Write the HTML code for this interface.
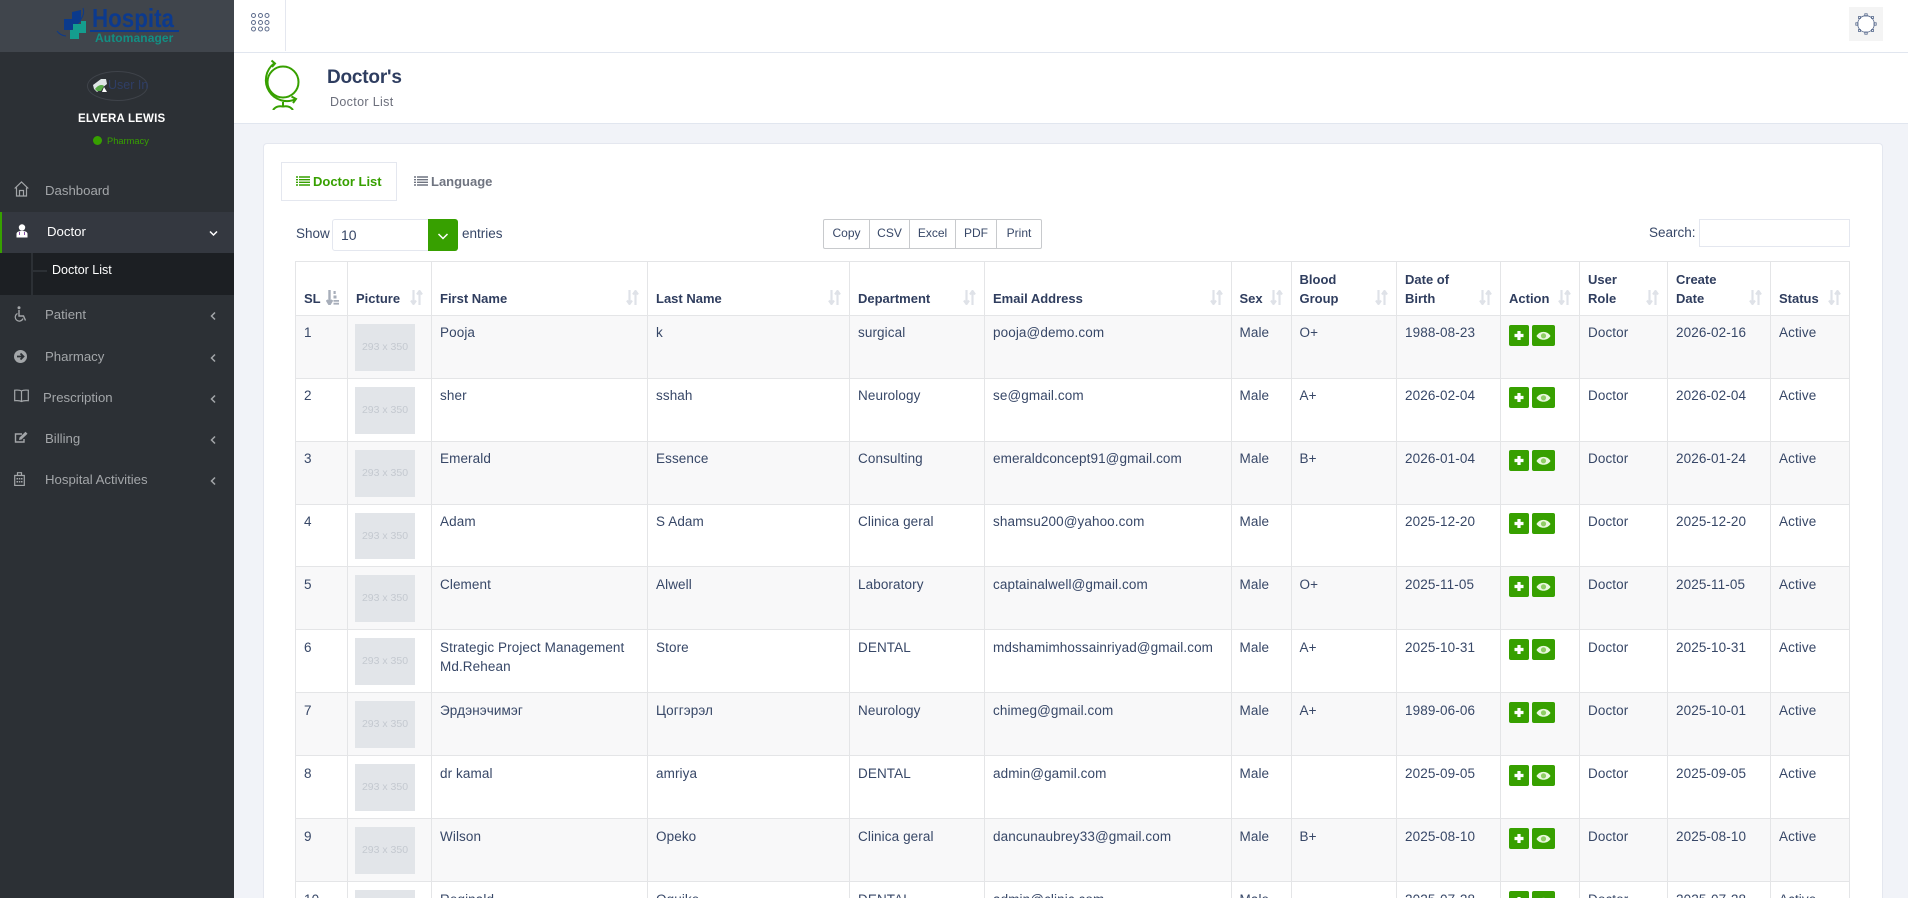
<!DOCTYPE html>
<html><head><meta charset="utf-8"><title>Doctor List</title>
<style>
*{box-sizing:border-box}
html,body{margin:0;padding:0;width:1908px;height:898px;overflow:hidden;background:#f1f3f8;font-family:"Liberation Sans",sans-serif;color:#374767}
#root{position:relative;width:1908px;height:898px;overflow:hidden;background:#f1f3f8}
.abs,.side span,.side svg{position:absolute}
.side{position:absolute;left:0;top:0;width:234px;height:898px;background:#2c3035;overflow:hidden}
.logo{position:absolute;left:0;top:0;width:234px;height:52px;background:#40454c}
.mi{font-size:13.2px;line-height:18px;color:#a3a6a9;white-space:nowrap;margin-top:1px}
.top{position:absolute;left:234px;top:0;width:1674px;height:53px;background:#fff;border-bottom:1px solid #e1e6ef}
.ph{position:absolute;left:234px;top:53px;width:1674px;height:71px;background:#fff;border-bottom:1px solid #e1e6ef}
.card{position:absolute;left:263px;top:143px;width:1620px;height:755px;background:#fff;border:1px solid #e4e7ef;border-bottom:0;border-radius:4px 4px 0 0}
.tw{position:absolute;left:295px;top:261px;width:1555px;height:637px;overflow:hidden}
table{width:1554px;border-collapse:collapse;table-layout:fixed;font-size:13.5px;letter-spacing:.1px;background:#fff}
th,td{border:1px solid #e4e5e7;text-align:left;overflow:visible}
th{height:54px;vertical-align:bottom;padding:0 8px 7px;font-size:13px;letter-spacing:0;line-height:19px;color:#2f3d5e;position:relative;font-weight:700}
td{height:63px;vertical-align:top;padding:8px 8px 0;line-height:19px}
tbody tr:nth-child(-n+4) td{padding-top:7px}
tbody tr:nth-child(odd) td{background:#f8f8f9}
tr.s td{height:62px}
tbody tr td.p{padding-top:8px;padding-left:8px}
.im{display:block;width:60px;height:47px;background:#e2e5e9;color:#c4c9d0;font-size:10.5px;line-height:47px;text-align:center;letter-spacing:0;margin-left:-1px;white-space:nowrap}
.so{position:absolute;right:8px;bottom:10px;width:13px;height:15px}
.ac{display:flex;gap:3px;margin-top:1px}
.ac i{display:block;height:20.5px;background:#37a000;border-radius:2px;position:relative}
.ac i.a{width:20px}.ac i.b{width:23px}
.ac svg{position:absolute;left:0;top:0}
.bg{position:absolute;left:823px;top:219px;width:219px;height:30px;border:1px solid #c8cacd;border-radius:2px;display:flex;font-size:12px;line-height:27px;color:#374767;background:#fff}
.bg div{text-align:center;border-right:1px solid #c8cacd}
.bg div:last-child{border-right:0}
</style></head><body>
<div id="root">
<svg width="0" height="0" style="position:absolute"><defs>
<symbol id="srt" viewBox="0 0 13 15"><path d="M3.500 0v13M1 10.500l2.500 3.500 2.500-3.500M9.500 15V2M7 4.500L9.500 1 12 4.500" fill="none" stroke="currentColor" stroke-width="2.200"/></symbol>
<symbol id="sra" viewBox="0 0 13 15"><path d="M3.500 0v13M.8 10l2.700 4.500L6.200 10" fill="none" stroke="currentColor" stroke-width="2.400"/><path d="M7.500 1h2.200v3H7.500zM7.500 5.500h3v3h-3zM7.500 10h5.500v1.800H7.500zM7.500 12.800h5.500v1.800H7.500z" fill="currentColor"/></symbol>
<symbol id="lst" viewBox="0 0 14 10"><path d="M0 1h2M3 1h11M0 3.700h2M3 3.700h11M0 6.300h2M3 6.300h11M0 9h2M3 9h11" stroke="currentColor" stroke-width="1.400" fill="none"/></symbol>
<symbol id="plus" viewBox="0 0 20 21"><path d="M10 6v9M5.500 10.500h9" stroke="#fff" stroke-width="3.200" fill="none"/></symbol>
<symbol id="eye" viewBox="0 0 23 21"><path d="M4.500 11c3-5.500 11-5.500 14 0-3 5-11 5-14 0z" fill="#eaf8df"/><circle cx="11.500" cy="10.800" r="2.600" fill="#8fce66"/></symbol>
<symbol id="chl" viewBox="0 0 8 12"><path d="M6 2.500L2.500 6 6 9.500" stroke="#a3a6a9" stroke-width="1.500" fill="none"/></symbol>
</defs></svg>

<div class="side">
 <div class="logo"></div>
 <svg style="left:56px;top:7px" width="32" height="34" viewBox="0 0 32 34"><path d="M27 1c2 6-1 10-4 14" fill="none" stroke="#0b3a8c" stroke-width="1"/><path d="M8 12h8V5l9-2v11l-9 9H8z" fill="#0b3a8c"/><path d="M14 23h3v-6h8v-3h5v12h-7v6h-9z" fill="#149d8e"/><path d="M1 24c2 3 6 5 9 5" fill="none" stroke="#0b3a8c" stroke-width="1"/></svg>
 <span style="left:92px;top:3px;font:700 26px/30px 'Liberation Sans',sans-serif;color:#0c3a8e;transform:scaleX(.86);transform-origin:0 0;white-space:nowrap">Hospita</span>
 <div class="abs" style="left:90px;top:30px;width:89px;height:1.500px;background:#0c3a8e"></div>
 <span style="left:95px;top:31px;font:700 12px/15px 'Liberation Sans',sans-serif;color:#128f84;letter-spacing:.1px">Automanager</span>

 <div class="abs" style="left:87px;top:71px;width:61px;height:30px;border:1px solid #3f434a;border-radius:50%"></div>
 <svg style="left:92px;top:78px" width="16" height="15" viewBox="0 0 16 15"><path d="M1 7l8-6 5 0 1 5-10 8-3-3z" fill="#dfe5e6"/><path d="M3 11c3-4 7-5 9-3l-3 5H5z" fill="#58a948"/><path d="M12 9l3 5h-5z" fill="#fff"/></svg>
 <span style="left:108px;top:76px;font-size:12.500px;line-height:18px;color:#2f3e66;white-space:nowrap">User In</span>
 <span style="left:78px;top:111px;font-size:11.500px;line-height:16px;font-weight:700;color:#fff;letter-spacing:.2px;white-space:nowrap">ELVERA LEWIS</span>
 <div class="abs" style="left:93px;top:136px;width:9px;height:9px;border-radius:50%;background:#37a000"></div>
 <span style="left:107px;top:134px;font-size:9.300px;line-height:14px;color:#37a000">Pharmacy</span>

 <svg style="left:14px;top:181px" width="15" height="16" viewBox="0 0 15 16"><path d="M.7 7.500L7.500 1l6.800 6.500M2.500 6.500V15h10V6.500M5.500 15V9.500h4V15" fill="none" stroke="#a3a6a9" stroke-width="1.200"/></svg>
 <span class="mi" style="left:45px;top:181px">Dashboard</span>

 <div class="abs" style="left:0;top:212px;width:234px;height:41px;background:#343840;border-left:2px solid #37a000"></div>
 <svg style="left:16px;top:224px" width="12" height="14" viewBox="0 0 12 14"><circle cx="6" cy="3.500" r="3.200" fill="#fff"/><path d="M.5 13.500V10c0-2 2-3 5.500-3s5.500 1 5.500 3v3.500z" fill="#fff"/><path d="M3.500 8v3M8.500 8v3" stroke="#8a4fa8" stroke-width="1"/></svg>
 <span class="mi" style="left:47px;top:222px;color:#fff">Doctor</span>
 <svg style="left:209px;top:230px" width="9" height="7" viewBox="0 0 9 7"><path d="M1 1.500l3.500 3.500L8 1.500" fill="none" stroke="#fff" stroke-width="1.500"/></svg>

 <div class="abs" style="left:0;top:253px;width:234px;height:42px;background:#1c1f23"></div>
 <div class="abs" style="left:31px;top:253px;width:2px;height:42px;background:#2c3035"></div>
 <div class="abs" style="left:33px;top:270px;width:14px;height:2px;background:#2c3035"></div>
 <span style="left:52px;top:262px;font-size:12.500px;line-height:16px;color:#fff">Doctor List</span>

 <svg style="left:14px;top:306px" width="13" height="16" viewBox="0 0 13 16"><circle cx="5" cy="1.800" r="1.500" fill="#a3a6a9"/><path d="M5 4v6h4.500l2 4.500" fill="none" stroke="#a3a6a9" stroke-width="1.400"/><path d="M3.500 7.500a4 4 0 1 0 5.500 5" fill="none" stroke="#a3a6a9" stroke-width="1.200"/></svg>
 <span class="mi" style="left:45px;top:305px">Patient</span>
 <svg style="left:209px;top:310px" width="8" height="12"><use href="#chl"/></svg>

 <svg style="left:14px;top:350px" width="13" height="13" viewBox="0 0 13 13"><circle cx="6.500" cy="6.500" r="6.500" fill="#a3a6a9"/><path d="M3 6.500h6M6.500 3.500l3 3-3 3" fill="none" stroke="#2c3035" stroke-width="1.800"/></svg>
 <span class="mi" style="left:45px;top:347px">Pharmacy</span>
 <svg style="left:209px;top:352px" width="8" height="12"><use href="#chl"/></svg>

 <svg style="left:14px;top:389px" width="15" height="14" viewBox="0 0 15 14"><path d="M7.500 2C6 1 3 1 .7 1.200v10.500c2.500-.2 5.300-.2 6.800.8 1.500-1 4.300-1 6.800-.8V1.200C12 1 9 1 7.500 2zM7.500 2v10.500" fill="none" stroke="#a3a6a9" stroke-width="1.200"/></svg>
 <span class="mi" style="left:43px;top:388px">Prescription</span>
 <svg style="left:209px;top:393px" width="8" height="12"><use href="#chl"/></svg>

 <svg style="left:14px;top:431px" width="14" height="13" viewBox="0 0 14 13"><path d="M10 8v3H1.500V3H8" fill="none" stroke="#a3a6a9" stroke-width="1.400"/><path d="M5 9l.5-2.500L11.500.8l2 2L7.500 8.500z" fill="#a3a6a9"/></svg>
 <span class="mi" style="left:45px;top:429px">Billing</span>
 <svg style="left:209px;top:434px" width="8" height="12"><use href="#chl"/></svg>

 <svg style="left:14px;top:472px" width="11" height="14" viewBox="0 0 11 14"><path d="M.7 3.500h9.600v10H.7zM3.500 3.500V.7h4v2.800" fill="none" stroke="#a3a6a9" stroke-width="1.200"/><path d="M2.500 6h1.500v1.500H2.500zM4.800 6h1.500v1.500H4.800zM7 6h1.500v1.500H7zM2.500 9h1.500v1.500H2.500zM4.800 9h1.500v1.500H4.800zM7 9h1.500v1.500H7z" fill="#a3a6a9"/></svg>
 <span class="mi" style="left:45px;top:470px">Hospital Activities</span>
 <svg style="left:209px;top:475px" width="8" height="12"><use href="#chl"/></svg>
</div>

<div class="top">
 <div class="abs" style="left:51px;top:0;width:1px;height:51px;background:#e4e7ef"></div>
 <svg style="left:16px;top:12px;position:absolute" width="21" height="21" viewBox="0 0 21 21" fill="none" stroke="#5d6c8c" stroke-width="1"><circle cx="3.500" cy="3.500" r="2"/><circle cx="10.500" cy="3.500" r="2"/><circle cx="17" cy="3.500" r="2"/><circle cx="3.500" cy="10.500" r="2"/><circle cx="10.500" cy="10.500" r="2"/><circle cx="17" cy="10.500" r="2"/><circle cx="3.500" cy="17" r="2"/><circle cx="10.500" cy="17" r="2"/><circle cx="17" cy="17" r="2"/></svg>
 <div class="abs" style="left:1615px;top:7px;width:34px;height:34px;background:#f4f4f4"></div>
 <svg style="left:1620px;top:12px;position:absolute" width="24" height="24" viewBox="0 0 24 24" fill="none" stroke="#56688c" stroke-width=".8"><circle cx="12" cy="12" r="8.300" fill="#fff"/><rect x="10.800" y="1.800" width="2.400" height="2.200"/><rect x="10.800" y="20" width="2.400" height="2.200"/><rect x="1.800" y="10.800" width="2.200" height="2.400"/><rect x="20" y="10.800" width="2.200" height="2.400"/><rect x="4.500" y="4.500" width="2" height="2"/><rect x="17.500" y="4.500" width="2" height="2"/><rect x="4.500" y="17.500" width="2" height="2"/><rect x="17.500" y="17.500" width="2" height="2"/></svg>
</div>

<div class="ph">
 <svg style="position:absolute;left:24px;top:5px" width="50" height="52" viewBox="0 0 50 52" fill="none" stroke="#37a000" stroke-width="2"><circle cx="25" cy="24" r="15.500"/><path d="M16 5.500A21 21 0 0 0 38 41"/><path d="M13.500 2.500l3.500 3-3 3.500M33.500 38.500l4.500 2.500-3 4"/><path d="M25 44v5M15 52c3-4 6.500-4 10-3.500 3.500-.5 7-.5 10 3.500"/></svg>
 <span style="position:absolute;left:93px;top:13px;font-size:19px;line-height:24px;font-weight:700;color:#2e3d60;letter-spacing:-.2px">Doctor's</span>
 <span style="position:absolute;left:96px;top:41px;font-size:12.500px;line-height:16px;color:#6c6f7c;letter-spacing:.35px">Doctor List</span>
</div>

<div class="card"></div>

<div class="abs" style="left:281px;top:162px;width:116px;height:39px;border:1px solid #e4e7ef;background:#fff"></div>
<svg class="abs" style="left:296px;top:176px;color:#37a000" width="14" height="10"><use href="#lst"/></svg>
<span class="abs" style="left:313px;top:173px;font-size:13px;line-height:18px;color:#37a000;font-weight:700;white-space:nowrap">Doctor List</span>
<svg class="abs" style="left:414px;top:176px;color:#6f7480" width="14" height="10"><use href="#lst"/></svg>
<span class="abs" style="left:431px;top:173px;font-size:13px;line-height:18px;color:#6f7480;font-weight:700;white-space:nowrap">Language</span>

<span class="abs" style="left:296px;top:225px;font-size:13.500px;line-height:18px">Show</span>
<div class="abs" style="left:332px;top:219px;width:126px;height:32px;border:1px solid #e4e7ef;border-radius:3px;background:#fff"></div>
<span class="abs" style="left:341px;top:226px;font-size:14px;line-height:18px">10</span>
<div class="abs" style="left:428px;top:219px;width:30px;height:32px;background:#37a000;border-radius:0 3px 3px 0"></div>
<svg class="abs" style="left:437px;top:232px" width="12" height="9" viewBox="0 0 12 9"><path d="M1.500 2l4.500 4.500L10.500 2" fill="none" stroke="#fff" stroke-width="1.500"/></svg>
<span class="abs" style="left:462px;top:225px;font-size:13.500px;line-height:18px">entries</span>

<div class="bg"><div style="width:46px">Copy</div><div style="width:40px">CSV</div><div style="width:46px">Excel</div><div style="width:41px">PDF</div><div style="width:44px">Print</div></div>

<span class="abs" style="left:1649px;top:224px;font-size:13.500px;line-height:18px">Search:</span>
<div class="abs" style="left:1699px;top:219px;width:151px;height:28px;border:1px solid #e4e7ef;background:#fff"></div>

<div class="tw">
<table>
<colgroup><col style="width:52px"><col style="width:84px"><col style="width:216px"><col style="width:202px"><col style="width:135px"><col style="width:246.500px"><col style="width:60px"><col style="width:105.500px"><col style="width:104px"><col style="width:79px"><col style="width:88px"><col style="width:103px"><col style="width:79px"></colgroup>
<thead><tr>
<th>SL<svg class="so" style="color:#a7aeba"><use href="#sra"/></svg></th>
<th>Picture<svg class="so" style="color:#dfe2e8"><use href="#srt"/></svg></th>
<th>First Name<svg class="so" style="color:#dfe2e8"><use href="#srt"/></svg></th>
<th>Last Name<svg class="so" style="color:#dfe2e8"><use href="#srt"/></svg></th>
<th>Department<svg class="so" style="color:#dfe2e8"><use href="#srt"/></svg></th>
<th>Email Address<svg class="so" style="color:#dfe2e8"><use href="#srt"/></svg></th>
<th>Sex<svg class="so" style="color:#dfe2e8"><use href="#srt"/></svg></th>
<th>Blood<br>Group<svg class="so" style="color:#dfe2e8"><use href="#srt"/></svg></th>
<th>Date of<br>Birth<svg class="so" style="color:#dfe2e8"><use href="#srt"/></svg></th>
<th>Action<svg class="so" style="color:#dfe2e8"><use href="#srt"/></svg></th>
<th>User<br>Role<svg class="so" style="color:#dfe2e8"><use href="#srt"/></svg></th>
<th>Create<br>Date<svg class="so" style="color:#dfe2e8"><use href="#srt"/></svg></th>
<th>Status<svg class="so" style="color:#dfe2e8"><use href="#srt"/></svg></th>
</tr></thead>
<tbody>
<tr><td>1</td><td class="p"><span class="im">293 x 350</span></td><td>Pooja</td><td>k</td><td>surgical</td><td>pooja@demo.com</td><td>Male</td><td>O+</td><td>1988-08-23</td><td style="padding-top:8px"><div class="ac"><i class="a"><svg width="20" height="21"><use href="#plus"/></svg></i><i class="b"><svg width="23" height="21"><use href="#eye"/></svg></i></div></td><td>Doctor</td><td>2026-02-16</td><td>Active</td></tr>
<tr><td>2</td><td class="p"><span class="im">293 x 350</span></td><td>sher</td><td>sshah</td><td>Neurology</td><td>se@gmail.com</td><td>Male</td><td>A+</td><td>2026-02-04</td><td><div class="ac"><i class="a"><svg width="20" height="21"><use href="#plus"/></svg></i><i class="b"><svg width="23" height="21"><use href="#eye"/></svg></i></div></td><td>Doctor</td><td>2026-02-04</td><td>Active</td></tr>
<tr><td>3</td><td class="p"><span class="im">293 x 350</span></td><td>Emerald</td><td>Essence</td><td>Consulting</td><td>emeraldconcept91@gmail.com</td><td>Male</td><td>B+</td><td>2026-01-04</td><td><div class="ac"><i class="a"><svg width="20" height="21"><use href="#plus"/></svg></i><i class="b"><svg width="23" height="21"><use href="#eye"/></svg></i></div></td><td>Doctor</td><td>2026-01-24</td><td>Active</td></tr>
<tr class="s"><td>4</td><td class="p"><span class="im" style="height:46px">293 x 350</span></td><td>Adam</td><td>S Adam</td><td>Clinica geral</td><td>shamsu200@yahoo.com</td><td>Male</td><td></td><td>2025-12-20</td><td><div class="ac"><i class="a"><svg width="20" height="21"><use href="#plus"/></svg></i><i class="b"><svg width="23" height="21"><use href="#eye"/></svg></i></div></td><td>Doctor</td><td>2025-12-20</td><td>Active</td></tr>
<tr><td>5</td><td class="p"><span class="im">293 x 350</span></td><td>Clement</td><td>Alwell</td><td>Laboratory</td><td>captainalwell@gmail.com</td><td>Male</td><td>O+</td><td>2025-11-05</td><td><div class="ac"><i class="a"><svg width="20" height="21"><use href="#plus"/></svg></i><i class="b"><svg width="23" height="21"><use href="#eye"/></svg></i></div></td><td>Doctor</td><td>2025-11-05</td><td>Active</td></tr>
<tr><td>6</td><td class="p"><span class="im">293 x 350</span></td><td>Strategic Project Management Md.Rehean</td><td>Store</td><td>DENTAL</td><td>mdshamimhossainriyad@gmail.com</td><td>Male</td><td>A+</td><td>2025-10-31</td><td><div class="ac"><i class="a"><svg width="20" height="21"><use href="#plus"/></svg></i><i class="b"><svg width="23" height="21"><use href="#eye"/></svg></i></div></td><td>Doctor</td><td>2025-10-31</td><td>Active</td></tr>
<tr><td>7</td><td class="p"><span class="im">293 x 350</span></td><td>Эрдэнэчимэг</td><td>Цоггэрэл</td><td>Neurology</td><td>chimeg@gmail.com</td><td>Male</td><td>A+</td><td>1989-06-06</td><td><div class="ac"><i class="a"><svg width="20" height="21"><use href="#plus"/></svg></i><i class="b"><svg width="23" height="21"><use href="#eye"/></svg></i></div></td><td>Doctor</td><td>2025-10-01</td><td>Active</td></tr>
<tr><td>8</td><td class="p"><span class="im">293 x 350</span></td><td>dr kamal</td><td>amriya</td><td>DENTAL</td><td>admin@gamil.com</td><td>Male</td><td></td><td>2025-09-05</td><td><div class="ac"><i class="a"><svg width="20" height="21"><use href="#plus"/></svg></i><i class="b"><svg width="23" height="21"><use href="#eye"/></svg></i></div></td><td>Doctor</td><td>2025-09-05</td><td>Active</td></tr>
<tr><td>9</td><td class="p"><span class="im">293 x 350</span></td><td>Wilson</td><td>Opeko</td><td>Clinica geral</td><td>dancunaubrey33@gmail.com</td><td>Male</td><td>B+</td><td>2025-08-10</td><td><div class="ac"><i class="a"><svg width="20" height="21"><use href="#plus"/></svg></i><i class="b"><svg width="23" height="21"><use href="#eye"/></svg></i></div></td><td>Doctor</td><td>2025-08-10</td><td>Active</td></tr>
<tr><td>10</td><td class="p"><span class="im">293 x 350</span></td><td>Reginald</td><td>Oguike</td><td>DENTAL</td><td>admin@clinic.com</td><td>Male</td><td></td><td>2025-07-28</td><td><div class="ac"><i class="a"><svg width="20" height="21"><use href="#plus"/></svg></i><i class="b"><svg width="23" height="21"><use href="#eye"/></svg></i></div></td><td>Doctor</td><td>2025-07-28</td><td>Active</td></tr>
</tbody></table>
</div>
</div>
</body></html>
